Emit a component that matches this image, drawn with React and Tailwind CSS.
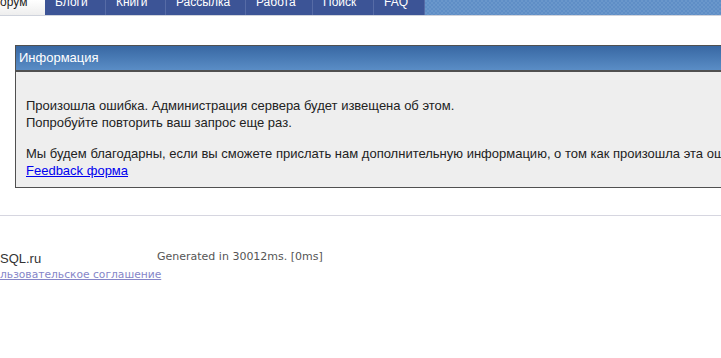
export default function App() {
  const tabs = [
    ["Блоги", 61],
    ["Книги", 60],
    ["Рассылка", 80],
    ["Работа", 67],
    ["Поиск", 61],
    ["FAQ", 51],
  ];
  return (
    <div className="w-[721px] h-[358px] overflow-hidden bg-white relative" style={{ fontFamily: '"Liberation Sans", Arial, sans-serif' }}>
      {/* tab bar */}
      <div className="flex h-[16px] border-b border-[#cfd3dc]">
        <div className="w-[45px] h-[15px] overflow-hidden bg-gradient-to-b from-white to-[#eeeeee] text-[12px] leading-[12px] text-[#222]">
          <div className="-mt-[4px] -ml-[9px]">Форум</div>
        </div>
        {tabs.map(([t, w]) => (
          <div key={t} style={{ width: w }} className="h-[15px] overflow-hidden bg-[#3c5496] border-r border-[#566ba6] text-[12px] leading-[12px] text-white pl-[10px]">
            <div className="-mt-[4px]">{t}</div>
          </div>
        ))}
        <div className="flex-1 h-[15px] bg-[#6a97cb] bg-[linear-gradient(45deg,#5f8ec6_25%,transparent_25%,transparent_75%,#5f8ec6_75%),linear-gradient(45deg,#5f8ec6_25%,transparent_25%,transparent_75%,#5f8ec6_75%)] bg-[length:4px_4px] bg-[position:0_0,2px_2px]" />
      </div>

      {/* info box */}
      <div className="ml-[15px] mt-[29px] w-[760px] border border-[#505050]">
        <div className="h-[26px] bg-gradient-to-b from-[#3868a3] to-[#5a8dc6] text-white text-[13px] leading-[24px] pl-[3px] border-b-2 border-[#505050]">
          Информация
        </div>
        <div className="bg-[#eeeeee] h-[115px] pl-[10px] pt-[25px] text-[13px] leading-[17px] text-[#222]">
          <div>Произошла ошибка. Администрация сервера будет извещена об этом.</div>
          <div>Попробуйте повторить ваш запрос еще раз.</div>
          <div className="mt-[14px] whitespace-nowrap">Мы будем благодарны, если вы сможете прислать нам дополнительную информацию, о том как произошла эта ошибка.</div>
          <a href="#" className="text-[#0000ee] underline">Feedback форма</a>
        </div>
      </div>

      {/* footer */}
      <div className="mt-[27px] h-px bg-[#d6d6e0]" />
      <div className="flex mt-[34px]">
        <div className="w-[157px] whitespace-nowrap">
          <div className="text-[13px] leading-[17px] text-[#333]">SQL.ru</div>
          <a href="#" className="block mt-[1px] text-[10.7px] leading-[14px] text-[#8585c8] underline whitespace-nowrap" style={{ fontFamily: '"DejaVu Sans", Verdana, sans-serif' }}>льзовательское соглашение</a>
        </div>
        <div className="text-[11px] leading-[14px] text-[#555] whitespace-nowrap" style={{ fontFamily: '"DejaVu Sans", Verdana, sans-serif' }}>
          Generated in 30012ms. [0ms]
        </div>
      </div>
    </div>
  );
}
